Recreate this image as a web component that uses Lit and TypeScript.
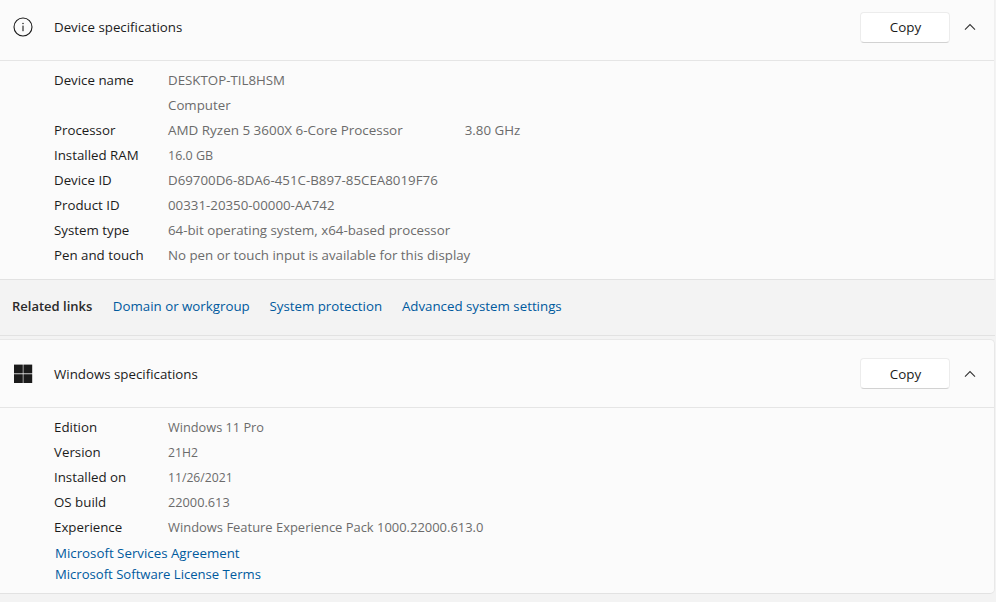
import { LitElement, html, css, svg } from "lit";
import { customElement } from "lit/decorators.js";

type Row = { label: string; value: string; speed?: string; fit?: string };

const device: Row[] = [
  { label: "Device name", value: "DESKTOP-TIL8HSM" },
  { label: "", value: "Computer" },
  { label: "Processor", value: "AMD Ryzen 5 3600X 6-Core Processor", speed: "3.80 GHz", fit: "fit-xl" },
  { label: "Installed RAM", value: "16.0 GB", fit: "fit-s" },
  { label: "Device ID", value: "D69700D6-8DA6-451C-B897-85CEA8019F76" },
  { label: "Product ID", value: "00331-20350-00000-AA742" },
  { label: "System type", value: "64-bit operating system, x64-based processor" },
  { label: "Pen and touch", value: "No pen or touch input is available for this display" },
];
const windows: Row[] = [
  { label: "Edition", value: "Windows 11 Pro", fit: "fit-m" },
  { label: "Version", value: "21H2", fit: "fit-xs" },
  { label: "Installed on", value: "11/26/2021", fit: "fit-xs" },
  { label: "OS build", value: "22000.613", fit: "fit-m" },
  { label: "Experience", value: "Windows Feature Experience Pack 1000.22000.613.0", fit: "fit-l" },
];

const infoIcon = svg`<svg class="icon" viewBox="0 0 20 20" width="20" height="20" fill="none"><circle cx="10" cy="10" r="9" stroke="#1b1b1b" stroke-width="1.1"/><rect x="9.45" y="8.6" width="1.1" height="5.6" fill="#1b1b1b"/><circle cx="10" cy="6.4" r=".75" fill="#1b1b1b"/></svg>`;
const winIcon = svg`<svg class="icon" viewBox="0 0 20 20" width="20" height="20" fill="#1b1b1b"><rect x="1" y="0.6" width="8.8" height="8.8"/><rect x="10.4" y="0.6" width="8.8" height="8.8"/><rect x="1" y="10.2" width="8.8" height="8.8"/><rect x="10.4" y="10.2" width="8.8" height="8.8"/></svg>`;
const chevron = svg`<svg class="chev" viewBox="0 0 12 8" width="12" height="8" fill="none"><path d="M1 6.6 6 1.6l5 5" stroke="#333" stroke-width="1.1"/></svg>`;

@customElement("app-root")
export class AppRoot extends LitElement {
  static styles = css`
    :host {
      display: block;
      width: 996px;
      height: 602px;
      overflow: hidden;
      background: #f3f3f3;
      font-family: "Open Sans", "Noto Sans", sans-serif;
      font-size: 13.3px;
      color: #1b1b1b;
    }
    .card {
      background: #fbfbfb;
      margin-right: 1px;
      border-right: 1px solid #e8e8e8;
      border-bottom: 1px solid #e2e2e2;
      box-sizing: border-box;
    }
    .first { height: 280px; border-right-color: #f0f0f0; }
    .second {
      height: 255px;
      margin-top: 3px;
      border-top: 1px solid #e8e8e8;
      border-radius: 0 5px 5px 0;
    }
    .head {
      display: flex;
      align-items: center;
      box-sizing: border-box;
      border-bottom: 1px solid #e5e5e5;
      padding: 0 18px 0 13px;
    }
    .first .head { height: 61px; padding-bottom: 6px; }
    .second .head { height: 68px; }
    .icon { flex: none; }
    .title { margin-left: 21px; flex: 1; }
    .copy {
      width: 90px;
      height: 31px;
      box-sizing: border-box;
      display: flex;
      align-items: center;
      justify-content: center;
      background: #fff;
      border: 1px solid #ececec;
      border-bottom-color: #d2d2d2;
      border-radius: 4px;
      font-size: 13.4px;
      padding-left: 1px;
      color: #1b1b1b;
    }
    .chev { margin-left: 14px; flex: none; }
    .body { padding: 7px 0 0 54px; }
    .row { display: flex; height: 25px; line-height: 25px; align-items: baseline; }
    .label { width: 114px; flex: none; }
    .value { color: #6b6b6b; }
    .fit-xs { font-size: 12.2px; }
    .fit-s { font-size: 12.5px; }
    .fit-m { font-size: 12.75px; }
    .fit-l { font-size: 12.95px; }
    .fit-xl { font-size: 13.45px; }
    .speed { color: #6b6b6b; margin-left: 62px; }
    .legal { display: flex; flex-direction: column; margin: 3px 0 0 1px; }
    a { color: #005a9e; text-decoration: none; white-space: nowrap; }
    .legal a { line-height: 21px; height: 21px; font-size: 13.1px; }
    .legal a.wide { font-size: 13.3px; }
    .related {
      height: 56px;
      box-sizing: border-box;
      display: flex;
      align-items: center;
      padding: 0 0 4px 12px;
      gap: 19.75px;
      border-bottom: 1px solid #e2e2e2;
      margin-right: 1px;
    }
    .related b { font-weight: 600; font-size: 13px; color: #2a2a2a; margin-right: 0.75px; }
  `;

  private rows(list: Row[]) {
    return list.map(
      (r) => html`<div class="row">
        <span class="label">${r.label}</span><span class="value ${r.fit ?? ""}">${r.value}</span>
        ${r.speed ? html`<span class="speed">${r.speed}</span>` : ""}
      </div>`
    );
  }

  render() {
    return html`
      <section class="card first">
        <div class="head">
          ${infoIcon}<span class="title">Device specifications</span>
          <div class="copy">Copy</div>${chevron}
        </div>
        <div class="body">${this.rows(device)}</div>
      </section>
      <nav class="related">
        <b>Related links</b>
        <a href="#">Domain or workgroup</a>
        <a href="#">System protection</a>
        <a href="#">Advanced system settings</a>
      </nav>
      <section class="card second">
        <div class="head">
          ${winIcon}<span class="title">Windows specifications</span>
          <div class="copy">Copy</div>${chevron}
        </div>
        <div class="body">
          ${this.rows(windows)}
          <div class="legal">
            <a class="wide" href="#">Microsoft Services Agreement</a>
            <a href="#">Microsoft Software License Terms</a>
          </div>
        </div>
      </section>
    `;
  }
}
